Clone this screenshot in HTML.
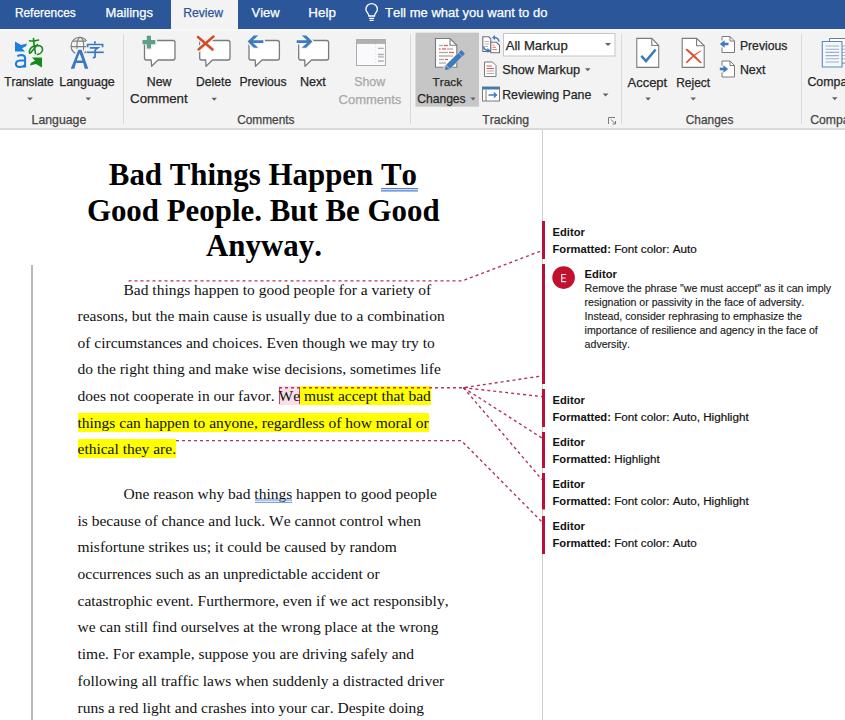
<!DOCTYPE html>
<html><head><meta charset="utf-8">
<style>
*{margin:0;padding:0;box-sizing:border-box}
html,body{width:845px;height:720px;overflow:hidden;background:#fff;font-family:"Liberation Sans",sans-serif;font-kerning:none}
.ov{position:absolute;left:0;top:0;overflow:visible}
.L{position:absolute;white-space:nowrap;font-family:"Liberation Sans",sans-serif;-webkit-text-stroke:0.25px currentColor}
#tabs{position:absolute;left:0;top:0;width:845px;height:29px;background:#2b579a}
#rtab{position:absolute;left:170.5px;top:0;width:67px;height:29px;background:#f3f3f3}
#ribbon{position:absolute;left:0;top:29px;width:845px;height:99px;background:#f3f3f3}
#rbb{position:absolute;left:0;top:128px;width:845px;height:2px;background:#dadada}
#rtop{position:absolute;left:0;top:29px;width:845px;height:2px;background:#f8f8f8}
.ttl{position:absolute;font-family:"Liberation Serif",serif;font-weight:bold;font-size:30.9px;line-height:30.9px;color:#000;white-space:nowrap}
.bl{position:absolute;font-family:"Liberation Serif",serif;font-size:15.5px;line-height:15.5px;color:#111;white-space:nowrap}
.hl{background:#ffff00;box-shadow:0 1px 0 #ffff00,0 -1px 0 #ffff00}
.we{background:#f9dfe7;box-shadow:0 1px 0 #f9dfe7,0 -1px 0 #f9dfe7,inset 1px 0 0 #c8436a,inset -1px 0 0 #c8436a}
.gu{text-decoration:underline;text-decoration-color:#4472c4;text-underline-offset:2px}
.cm{position:absolute;font-family:"Liberation Sans",sans-serif;font-size:11.2px;line-height:11.2px;color:#111;white-space:nowrap}
.cm span{font-size:11.7px;-webkit-text-stroke:0.2px #111}
.cc{position:absolute;font-family:"Liberation Sans",sans-serif;font-size:10.6px;line-height:10.6px;color:#1a1a1a;white-space:nowrap;-webkit-text-stroke:0.15px #1a1a1a}
</style></head><body>
<div id="tabs"><div id="rtab"></div></div>
<div id="ribbon"></div>
<div id="rtop"></div>
<div id="rbb"></div>
<div style="position:absolute;left:31px;top:264.5px;width:2px;height:456px;background:#b8b8b8"></div>
<div style="position:absolute;left:542px;top:130px;width:1px;height:590px;background:#cfcfcf"></div>

<svg class="ov" width="845" height="129" viewBox="0 0 845 129">
<!-- separators -->
<rect x="123" y="34" width="1" height="90" fill="#d9d9d9"/>
<rect x="410" y="34" width="1" height="90" fill="#d9d9d9"/>
<rect x="621" y="34" width="1" height="90" fill="#d9d9d9"/>
<rect x="801" y="34" width="1" height="90" fill="#d9d9d9"/>
<!-- lightbulb -->
<g fill="none" stroke="#fff" stroke-width="1.3">
 <path d="M368.8,16 C368.8,13.2 366,12.2 365.9,9.4 A5.75,5.75 0 0 1 377.4,9.4 C377.3,12.2 374.5,13.2 374.5,16 Z"/>
 <path d="M369.2,18.3 H374.1 M369.6,20.3 H373.7"/>
</g>
<!-- Translate icon -->
<polygon points="15,41.5 21,45 27,43.5 26,46.2 22,48.3 25,51.5 15,51.5" fill="#1b7fdf"/>
<polygon points="42,67.5 36,64 30,65.5 31,62.8 35,60.7 32,57.5 42,57.5" fill="#168a1e"/>
<path d="M17.3,56 Q19.8,55 22,55 Q25.1,55.2 25.1,58.6 V67.5 M25.1,60.4 H20 Q15.9,60.6 15.9,64 Q15.9,66.9 19.8,66.9 Q23.6,66.9 25.1,64.8" fill="none" stroke="#1b7cdc" stroke-width="2"/>
<g fill="none" stroke="#168a1e" stroke-width="1.6" stroke-linecap="round">
 <path d="M29.5,40.8 Q34,41.5 38.5,40"/>
 <path d="M33.5,38.5 Q34,46 35.5,53.5"/>
 <path d="M37.5,44.5 Q33,50 31,52.5 Q29,54.5 29.5,51 Q30.5,46 37,45.5 Q43,45.5 42.5,50 Q42,53.5 37.5,54.5"/>
</g>
<!-- Language icon -->
<g fill="none" stroke="#808080" stroke-width="1.2">
 <circle cx="79.6" cy="45.9" r="8.6"/>
 <ellipse cx="80.3" cy="45.9" rx="3.4" ry="8.6"/>
 <path d="M73,41.1 H86.5 M71,46.7 H88.5"/>
</g>
<path d="M70.5,69 L77.8,49.6 L82,49.6 L89.2,69 L85.6,69 L75.6,69 L74.3,69 Z" fill="#f3f3f3" stroke="#f3f3f3" stroke-width="2"/>
<path d="M70.7,68.8 L78.4,49.8 L81.6,49.8 L88.3,68.8 L84.7,68.8 L83.2,63.1 L76.0,63.1 L74.4,68.8 Z M76.8,60.5 L82.4,60.5 L79.6,53.2 Z" fill="#3b78c1" fill-rule="evenodd"/>
<rect x="86" y="41" width="18.5" height="17.5" fill="#f3f3f3"/>
<g fill="none" stroke="#3b78c1" stroke-width="1.7">
 <path d="M94.9,41.2 V43.8"/>
 <path d="M87.6,47.2 V44.5 H102.6 V47.2"/>
 <path d="M89.8,47.8 H98 L94.9,50.2"/>
 <path d="M86.6,52.3 H103.7"/>
 <path d="M95.1,50 V57 Q95,57.6 92.8,57.6"/>
</g>
<!-- New Comment -->
<g fill="#fff" stroke="#7b7b7b" stroke-width="1.3" stroke-linejoin="round">
 <path d="M146.5,40.5 H173 Q175,40.5 175,42.5 V58 Q175,60 173,60 H158 L151.6,66.3 L151.2,60 H146.5 Q144.5,60 144.5,58 V42.5 Q144.5,40.5 146.5,40.5 Z"/>
</g>
<path d="M140.5,38.5 H146 V33.5 H152 V38.5 H157 V44.5 H152 V50 H146 V44.5 H140.5 Z" fill="#f3f3f3"/>
<path d="M142.5,40 H146.8 V35.8 H151 V40 H155.3 V44.3 H151 V48.6 H146.8 V44.3 H142.5 Z" fill="#5e9f8a"/>
<!-- Delete -->
<g fill="#fff" stroke="#7b7b7b" stroke-width="1.3" stroke-linejoin="round">
 <path d="M201.7,40.5 H228 Q230,40.5 230,42.5 V58 Q230,60 228,60 H212.5 L206,66.3 L205.7,60 H201.7 Q199.7,60 199.7,58 V42.5 Q199.7,40.5 201.7,40.5 Z"/>
</g>
<g stroke="#f3f3f3" stroke-width="5" stroke-linecap="round"><path d="M198,37 L212.5,49.5 M213.5,36.5 L198.5,49.5"/></g>
<g stroke="#d24a27" stroke-width="2.4" stroke-linecap="round"><path d="M198,37 L212.5,49.5 M213.5,36.5 L198.5,49.5"/></g>
<!-- Previous -->
<g fill="#fff" stroke="#7b7b7b" stroke-width="1.3" stroke-linejoin="round">
 <path d="M251,40.5 H277.4 Q279.4,40.5 279.4,42.5 V58 Q279.4,60 277.4,60 H262 L255.5,66.3 L255.2,60 H251 Q249,60 249,58 V42.5 Q249,40.5 251,40.5 Z"/>
</g>
<path d="M245.5,41.6 L253,34.2 H261 L257,38.8 H265 V44.5 H257 L261,49 H253 Z" fill="#f3f3f3"/>
<path d="M247.6,41.6 L253.8,35.6 H258.2 L253,40.3 H263.3 V43 H253 L258.2,47.7 H253.8 Z" fill="#3d7bbf"/>
<!-- Next -->
<g fill="#fff" stroke="#7b7b7b" stroke-width="1.3" stroke-linejoin="round">
 <path d="M300.7,40.5 H326.6 Q328.6,40.5 328.6,42.5 V58 Q328.6,60 326.6,60 H311.5 L305,66.3 L304.7,60 H300.7 Q298.7,60 298.7,58 V42.5 Q298.7,40.5 300.7,40.5 Z"/>
</g>
<path d="M314.5,41.6 L307,34.2 H299 L303,38.8 H295 V44.5 H303 L299,49 H307 Z" fill="#f3f3f3"/>
<path d="M312.4,41.6 L306.2,35.6 H301.8 L307,40.3 H296.7 V43 H307 L301.8,47.7 H306.2 Z" fill="#3d7bbf"/>
<!-- Show Comments (disabled) -->
<rect x="356.5" y="39.5" width="29" height="26" fill="#faf9fb" stroke="#acacac" stroke-width="1"/>
<rect x="356.5" y="39.3" width="29" height="4.6" fill="#b0b0b0"/>
<path d="M375.5,44 V65" stroke="#e2e2e2" stroke-width="1" stroke-dasharray="1 2"/>
<g stroke="#b0b0b0" stroke-width="1.3"><path d="M378,48.3 H383.8 M378,54.5 H383.8 M378,56.8 H383.8 M378,61 H383.8"/></g>
<!-- Track Changes pressed -->
<rect x="415.5" y="32.7" width="63.5" height="74" fill="#c6c6c6"/>
<path d="M435.5,38.5 H450 L456.8,45.3 V67.3 H435.5 Z" fill="#fff" stroke="#7b7b7b" stroke-width="1.1"/>
<path d="M450,38.5 V45.3 H456.8" fill="none" stroke="#7b7b7b" stroke-width="1.1"/>
<g stroke-width="1.3">
 <path d="M439,45.5 H443" stroke="#aaa"/><path d="M444,45.5 H448" stroke="#e06060"/>
 <path d="M439,49 H440.5" stroke="#e06060"/><path d="M442,49 H446" stroke="#e06060"/><path d="M447,49 H453" stroke="#aaa"/>
 <path d="M439,52.5 H448" stroke="#aaa"/><path d="M449,52.5 H454" stroke="#e06060"/>
 <path d="M439,56 H453" stroke="#aaa"/>
 <path d="M439,59.5 H444" stroke="#aaa"/><path d="M445,59.5 H448" stroke="#e06060"/>
 <path d="M439,63 H446" stroke="#aaa"/>
</g>
<g transform="translate(454,61) rotate(-45)">
 <rect x="-13.5" y="-3.2" width="27" height="6.4" fill="#c6c6c6"/>
 <path d="M-12.8,0 L-9,-2.5 L-9,2.5 Z" fill="#3e78bd"/>
 <rect x="-8.3" y="-2.5" width="17" height="5" fill="#3e78bd"/>
 <rect x="9.3" y="-2.5" width="3.6" height="5" fill="#3e78bd"/>
</g>
<!-- small tracking icons -->
<g>
 <path d="M482.8,36.8 H488.8 L490.8,38.8 V51.5 H482.8 Z" fill="#fff" stroke="#6f6f6f" stroke-width="1.1"/>
 <path d="M484.5,41.5 H489 M484.5,44 H489 M484.5,46.5 H488" stroke="#b0b0b0" stroke-width="0.9"/>
 <path d="M490.8,42.3 H496.5 L499.5,45.3 V52.7 H490.8 Z" fill="#fff" stroke="#6f6f6f" stroke-width="1.1"/>
 <path d="M492.5,45 H494.5 M492.5,47.3 H496 M492.5,49.6 H497" stroke="#e06060" stroke-width="0.9"/>
 <path d="M499,41.5 Q498.5,37.5 493.5,37.5" fill="none" stroke="#3d7bbf" stroke-width="1.6"/>
 <path d="M492,37.5 L495,35 L495,40 Z" fill="#3d7bbf"/>
 <path d="M483.5,46.5 Q484,50.5 489,50.5" fill="none" stroke="#3d7bbf" stroke-width="1.6"/>
 <path d="M490.5,50.5 L487.5,48 L487.5,53 Z" fill="#3d7bbf"/>
</g>
<g>
 <path d="M484.5,62 H492.5 L496,65.5 V76.5 H484.5 Z" fill="#fff" stroke="#7b7b7b" stroke-width="1"/>
 <path d="M486.5,66 H492 M486.5,68.5 H494" stroke="#e05050" stroke-width="1.1"/>
 <path d="M486.5,71 H494 M486.5,73.5 H494" stroke="#aaa" stroke-width="1.1"/>
</g>
<g>
 <rect x="482.5" y="87" width="17" height="14" fill="#fff" stroke="#7b7b7b" stroke-width="1"/>
 <rect x="482.5" y="87" width="17" height="2.5" fill="#3d7bbf"/>
 <path d="M486,90 V101" stroke="#7b7b7b" stroke-width="1"/>
 <path d="M488.5,95 H496.5 M493.8,92.5 L496.5,95 L493.8,97.5" fill="none" stroke="#3d7bbf" stroke-width="1.4"/>
</g>
<!-- All Markup dropdown -->
<rect x="503.5" y="33.5" width="111.5" height="22.5" fill="#fff" stroke="#c6c6c6" stroke-width="1"/>
<!-- launcher -->
<g fill="none" stroke="#7b7b7b" stroke-width="1"><path d="M608.5,124 V117.5 H615 M611,119.5 L615,123.5 M612.5,124 H615.5 V121"/></g>
<!-- Accept -->
<path d="M636.8,38.4 H651.8 L658.7,45.5 V67.4 H636.8 Z" fill="#fff" stroke="#7b7b7b" stroke-width="1.1"/>
<path d="M651.8,38.4 V45.5 H658.7" fill="none" stroke="#7b7b7b" stroke-width="1.1"/>
<path d="M641.3,55.8 L646,61 L655.6,49.5" fill="none" stroke="#3d7bbf" stroke-width="2.6"/>
<!-- Reject -->
<path d="M682.2,38.4 H696.6 L704.2,45.8 V67.4 H682.2 Z" fill="#fff" stroke="#7b7b7b" stroke-width="1.1"/>
<path d="M696.6,38.4 V45.8 H704.2" fill="none" stroke="#7b7b7b" stroke-width="1.1"/>
<path d="M685.5,49.8 Q686.5,48.2 688,49.2 Q695,54.5 701.8,62.6 Q701,63.8 699.6,62.8 Q692.5,56.5 685.5,49.8 Z" fill="#d55a3a"/>
<path d="M701.3,50.2 Q701.8,50.8 701,51.3 Q693.5,56 687.6,62.8 Q686.3,63.5 685.8,62.2 Q692,55 701.3,50.2 Z" fill="#d55a3a"/>
<!-- Changes prev/next -->
<path d="M722,36.5 H730 L734.5,41 V52.5 H722 Z" fill="#fff" stroke="#7b7b7b" stroke-width="1"/>
<path d="M730,36.5 V41 H734.5" fill="none" stroke="#7b7b7b" stroke-width="1"/>
<rect x="719" y="40.5" width="5" height="7" fill="#f3f3f3"/>
<path d="M719.8,44 L724.6,40.2 L724.6,47.8 Z" fill="#3d7bbf"/><rect x="723.5" y="42.7" width="5" height="2.6" fill="#3d7bbf"/>
<path d="M722,61 H730 L734.5,65.5 V77 H722 Z" fill="#fff" stroke="#7b7b7b" stroke-width="1"/>
<path d="M730,61 V65.5 H734.5" fill="none" stroke="#7b7b7b" stroke-width="1"/>
<rect x="719" y="65.5" width="5" height="7" fill="#f3f3f3"/>
<path d="M728.2,69 L723.4,65.2 L723.4,72.8 Z" fill="#3d7bbf"/><rect x="719.8" y="67.7" width="4.5" height="2.6" fill="#3d7bbf"/>
<!-- Compare -->
<path d="M829.5,38.5 H846 V63 H829.5 Z" fill="#fff" stroke="#7b7b7b" stroke-width="1"/>
<g stroke="#9fb0c6" stroke-width="1"><path d="M842,46 H846 M842,49.2 H846 M842,52.4 H846 M842,55.6 H846 M842,58.8 H846"/></g>
<path d="M822.3,41.5 H842 V67 H822.3 Z" fill="#f4f8fd" stroke="#5b89c2" stroke-width="1.1"/>
<g stroke="#9fb0c6" stroke-width="1.1"><path d="M825.5,46 H839 M825.5,49.2 H839 M825.5,52.4 H839 M825.5,55.6 H839 M825.5,58.8 H839 M825.5,62 H839"/></g>
<!-- carets -->
<polygon points="27,97.5 33,97.5 30.0,100.5" fill="#606060"/>
<polygon points="85.5,97.5 91,97.5 88.25,100.5" fill="#606060"/>
<polygon points="211.5,97.7 217,97.7 214.25,100.7" fill="#606060"/>
<polygon points="470.5,97.5 475.5,97.5 473.0,100.5" fill="#606060"/>
<polygon points="605,43 611,43 608.0,46" fill="#606060"/>
<polygon points="585,68.3 590.5,68.3 587.75,71.3" fill="#606060"/>
<polygon points="602.7,93.5 608.5,93.5 605.6,96.5" fill="#606060"/>
<polygon points="645.4,97.4 650.8,97.4 648.0999999999999,100.4" fill="#606060"/>
<polygon points="690.5,97.4 696,97.4 693.25,100.4" fill="#606060"/>
<polygon points="832,97.2 837.5,97.2 834.75,100.2" fill="#606060"/>
</svg>

<div class="L" style="left:14.9px;top:8px;font-size:11.9px;line-height:11.9px;color:#fff">References</div>
<div class="L" style="left:105.4px;top:6px;font-size:13.0px;line-height:13.0px;color:#fff">Mailings</div>
<div class="L" style="left:183.2px;top:7px;font-size:12.2px;line-height:12.2px;color:#2b579a">Review</div>
<div class="L" style="left:251.5px;top:6px;font-size:13.0px;line-height:13.0px;color:#fff">View</div>
<div class="L" style="left:308.3px;top:6px;font-size:13.4px;line-height:13.4px;color:#fff">Help</div>
<div class="L" style="left:385.0px;top:6px;font-size:13.05px;line-height:13.05px;color:#fff">Tell me what you want to do</div>
<div class="L" style="left:4.2px;top:77px;font-size:11.86px;line-height:11.86px;color:#262626">Translate</div>
<div class="L" style="left:59.2px;top:76px;font-size:12.5px;line-height:12.5px;color:#262626">Language</div>
<div class="L" style="left:146.7px;top:76px;font-size:12.4px;line-height:12.4px;color:#262626">New</div>
<div class="L" style="left:130.1px;top:92px;font-size:13.29px;line-height:13.29px;color:#262626">Comment</div>
<div class="L" style="left:196.1px;top:76px;font-size:12.14px;line-height:12.14px;color:#262626">Delete</div>
<div class="L" style="left:239.4px;top:76px;font-size:12.16px;line-height:12.16px;color:#262626">Previous</div>
<div class="L" style="left:299.9px;top:76px;font-size:12.6px;line-height:12.6px;color:#262626">Next</div>
<div class="L" style="left:354.2px;top:76px;font-size:12.35px;line-height:12.35px;color:#a8a8a8">Show</div>
<div class="L" style="left:338.6px;top:93px;font-size:12.99px;line-height:12.99px;color:#a8a8a8">Comments</div>
<div class="L" style="left:432.6px;top:77px;font-size:11.8px;line-height:11.8px;color:#262626">Track</div>
<div class="L" style="left:417.2px;top:93px;font-size:12.12px;line-height:12.12px;color:#262626">Changes</div>
<div class="L" style="left:505.7px;top:39px;font-size:13.13px;line-height:13.13px;color:#262626">All Markup</div>
<div class="L" style="left:502.2px;top:64px;font-size:12.76px;line-height:12.76px;color:#262626">Show Markup</div>
<div class="L" style="left:502.2px;top:89px;font-size:12.34px;line-height:12.34px;color:#262626">Reviewing Pane</div>
<div class="L" style="left:627.5px;top:76px;font-size:12.99px;line-height:12.99px;color:#262626">Accept</div>
<div class="L" style="left:676.2px;top:77px;font-size:11.99px;line-height:11.99px;color:#262626">Reject</div>
<div class="L" style="left:739.9px;top:40px;font-size:12.23px;line-height:12.23px;color:#262626">Previous</div>
<div class="L" style="left:739.9px;top:64px;font-size:12.4px;line-height:12.4px;color:#262626">Next</div>
<div class="L" style="left:807.4px;top:76px;font-size:12.4px;line-height:12.4px;color:#262626">Compa</div>
<div class="L" style="left:31.6px;top:114px;font-size:12.29px;line-height:12.29px;color:#444">Language</div>
<div class="L" style="left:237.2px;top:115px;font-size:11.85px;line-height:11.85px;color:#444">Comments</div>
<div class="L" style="left:482.2px;top:114px;font-size:12.24px;line-height:12.24px;color:#444">Tracking</div>
<div class="L" style="left:685.8px;top:115px;font-size:11.89px;line-height:11.89px;color:#444">Changes</div>
<div class="L" style="left:810.2px;top:114px;font-size:12.2px;line-height:12.2px;color:#444">Compa</div>
<div class="ttl" style="left:108.8px;top:160.0px">Bad Things Happen <span class="gu2">To</span></div>
<div class="ttl" style="left:86.9px;top:196.0px">Good People. But Be Good</div>
<div class="ttl" style="left:206.0px;top:231.0px">Anyway.</div>
<div class="bl" style="left:123.5px;top:282.0px">Bad things happen to good people for a variety of</div>
<div class="bl" style="left:77.5px;top:308.0px">reasons, but the main cause is usually due to a combination</div>
<div class="bl" style="left:77.5px;top:335.0px">of circumstances and choices. Even though we may try to</div>
<div class="bl" style="left:77.5px;top:361.0px">do the right thing and make wise decisions, sometimes life</div>
<div class="bl" style="left:77.5px;top:388.0px">does not cooperate in our favor. <span class="we">We</span><span class="hl"> must accept that bad</span></div>
<div class="bl" style="left:77.5px;top:415.0px"><span class="hl">things can happen to anyone, regardless of how moral or</span></div>
<div class="bl" style="left:77.5px;top:441.0px"><span class="hl">ethical they are.</span></div>
<div class="bl" style="left:123.5px;top:486.0px">One reason why bad things happen to good people</div>
<div class="bl" style="left:77.5px;top:513.0px">is because of chance and luck. We cannot control when</div>
<div class="bl" style="left:77.5px;top:539.0px">misfortune strikes us; it could be caused by random</div>
<div class="bl" style="left:77.5px;top:566.0px">occurrences such as an unpredictable accident or</div>
<div class="bl" style="left:77.5px;top:593.0px">catastrophic event. Furthermore, even if we act responsibly,</div>
<div class="bl" style="left:77.5px;top:619.0px">we can still find ourselves at the wrong place at the wrong</div>
<div class="bl" style="left:77.5px;top:646.0px">time. For example, suppose you are driving safely and</div>
<div class="bl" style="left:77.5px;top:673.0px">following all traffic laws when suddenly a distracted driver</div>
<div class="bl" style="left:77.5px;top:700.0px">runs a red light and crashes into your car. Despite doing</div>

<svg class="ov" width="845" height="720" viewBox="0 0 845 720">
<g fill="none" stroke="#ad365f" stroke-width="1.4" stroke-dasharray="3 3">
 <path d="M128.5,280.9 H462.2 L542,250.6"/>
 <path d="M279,387.7 H463.4 L542,375.9"/>
 <path d="M463.4,387.7 L542,396.6"/>
 <path d="M463.4,387.7 L542,438"/>
 <path d="M463.4,387.7 L542,479.6"/>
 <path d="M176,440.6 H461.3 L542,522"/>
</g>
<rect x="542" y="221" width="3" height="38" fill="#b8123c"/>
<rect x="542" y="264" width="3" height="120" fill="#b8123c"/>
<rect x="542" y="389" width="3" height="38" fill="#b8123c"/>
<rect x="542" y="432" width="3" height="36" fill="#b8123c"/>
<rect x="542" y="473" width="3" height="36.5" fill="#b8123c"/>
<rect x="542" y="516" width="3" height="38" fill="#b8123c"/>
<circle cx="563.6" cy="277.6" r="11.3" fill="#c1112f"/>
<path d="M566.2,274.5 H561.7 V281.6 H566.2 M561.7,278 H565.6" fill="none" stroke="#fbe0e5" stroke-width="1.2"/>
<!-- grammar double underline -->
<path d="M381,188.6 H418 M381,190.9 H418" stroke="#4f7fd0" stroke-width="1.1"/>
<path d="M255,500 H292.2 M255,502.3 H292.2" stroke="#5b8fd8" stroke-width="1"/>
</svg>

<div class="cm" style="left:552.5px;top:227.0px"><b>Editor</b></div>
<div class="cm" style="left:552.5px;top:243.0px"><b>Formatted:</b><span> Font color: Auto</span></div>
<div class="cm" style="left:552.5px;top:395.0px"><b>Editor</b></div>
<div class="cm" style="left:552.5px;top:411.0px"><b>Formatted:</b><span> Font color: Auto, Highlight</span></div>
<div class="cm" style="left:552.5px;top:437.0px"><b>Editor</b></div>
<div class="cm" style="left:552.5px;top:453.0px"><b>Formatted:</b><span> Highlight</span></div>
<div class="cm" style="left:552.5px;top:479.0px"><b>Editor</b></div>
<div class="cm" style="left:552.5px;top:495.0px"><b>Formatted:</b><span> Font color: Auto, Highlight</span></div>
<div class="cm" style="left:552.5px;top:521.0px"><b>Editor</b></div>
<div class="cm" style="left:552.5px;top:537.0px"><b>Formatted:</b><span> Font color: Auto</span></div>
<div class="cm" style="left:584.5px;top:269.0px"><b>Editor</b></div>
<div class="cc" style="left:584.6px;top:283.0px">Remove the phrase "we must accept" as it can imply</div>
<div class="cc" style="left:584.6px;top:297.0px">resignation or passivity in the face of adversity.</div>
<div class="cc" style="left:584.6px;top:311.0px">Instead, consider rephrasing to emphasize the</div>
<div class="cc" style="left:584.6px;top:325.0px">importance of resilience and agency in the face of</div>
<div class="cc" style="left:584.6px;top:339.0px">adversity.</div>
</body></html>
